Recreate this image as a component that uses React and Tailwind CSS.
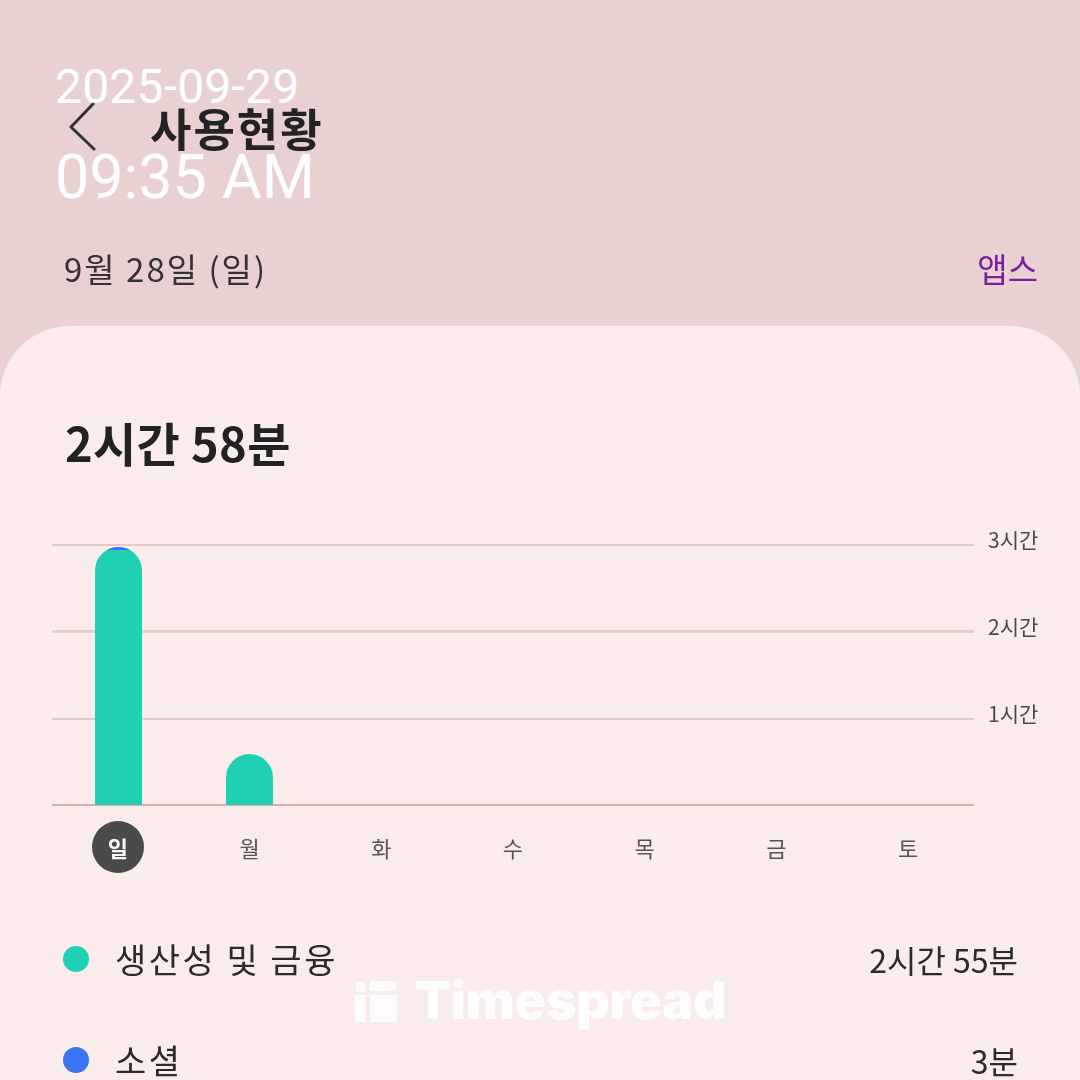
const KR = { fontFamily: '"Noto Sans CJK KR", sans-serif' };

const days = ["일", "월", "화", "수", "목", "금", "토"];

function Row({ label, color, time }) {
  return (
    <div className="flex items-center justify-between pl-[63px] pr-[62px]">
      <div className="flex items-center gap-[26px]">
        <span className={`w-[26px] h-[26px] rounded-full ${color}`} />
        <span className="text-[34px] leading-[44px] text-[#2b2b2b] tracking-[2.5px]">{label}</span>
      </div>
      <span className="text-[32px] leading-[44px] text-[#2b2b2b]">{time}</span>
    </div>
  );
}

export default function App() {
  return (
    <div style={KR} className="relative w-[1080px] h-[1080px] overflow-hidden bg-[#e9d1d1]">
      <div className="blur-[0.5px]">
        <header className="h-[326px] flex flex-col">
          <div className="flex items-center pl-[68px] pt-[100px] h-[156px]">
            <svg width="28" height="50" viewBox="0 0 28 50" fill="none" className="mt-[-2px]">
              <path d="M25 2 L3 25 L26 47" stroke="#333333" strokeWidth="3" strokeLinecap="round" strokeLinejoin="round" />
            </svg>
            <h1 className="ml-[54px] text-[45px] leading-[56px] font-bold text-[#232323] tracking-[2px]">사용현황</h1>
          </div>
          <div className="flex items-center justify-between pl-[64px] pr-[42px] mt-[88px]">
            <span className="text-[33px] leading-[48px] text-[#333333] tracking-[2px]">9월 28일 (일)</span>
            <span className="text-[33px] leading-[48px] text-[#7a1fa0]">앱스</span>
          </div>
        </header>

        <main className="h-[900px] bg-[#f9ecea] rounded-t-[70px]">
          <h2 className="pl-[65px] pt-[84px] text-[47px] leading-[64px] font-bold text-[#222222] tracking-[0.3px]">2시간 58분</h2>

          <div className="flex mt-[70px] pl-[52px]">
            <div className="relative w-[922px] h-[262px] flex flex-col justify-between">
              <div className="h-[2px] bg-[#e6c8c4]" />
              <div className="h-[3px] bg-[#e8cdc9]" />
              <div className="h-[2px] bg-[#e6c8c4]" />
              <div className="h-[2px] bg-[#dcaeaa]" />
              <div className="absolute inset-x-0 bottom-[1px] pl-[1px] grid grid-cols-7 items-end h-[259px]">
                <div className="flex justify-center">
                  <div className="w-[47px] h-[258px] rounded-t-[24px] bg-[#1fd0b4] overflow-hidden">
                    <div className="h-[3px] bg-[#3b74f5]" />
                  </div>
                </div>
                <div className="flex justify-center pr-[2px]">
                  <div className="w-[47px] h-[51px] rounded-t-[24px] bg-[#1fd0b4]" />
                </div>
              </div>
            </div>
            <div className="flex flex-col ml-[14px] mt-[-23px] text-[21px] leading-[36px] text-[#4a4a4a]">
              <span className="h-[87px]">3시간</span>
              <span className="h-[87px]">2시간</span>
              <span className="h-[87px]">1시간</span>
            </div>
          </div>

          <div className="grid grid-cols-7 w-[922px] ml-[52px] mt-[15px]">
            {days.map((d, i) => (
              <div key={d} className="flex justify-center">
                <span
                  className={`w-[52px] h-[52px] rounded-full flex items-center justify-center text-[22px] ${
                    i === 0 ? "bg-[#4a4a4a] text-[#f5f5f5] font-bold" : "text-[#555555]"
                  }`}
                >
                  {d}
                </span>
              </div>
            ))}
          </div>

          <div className="flex flex-col gap-[57px] mt-[64px]">
            <Row label="생산성 및 금융" color="bg-[#1fd0b4]" time="2시간 55분" />
            <Row label="소셜" color="bg-[#3b74f5]" time="3분" />
          </div>
        </main>
      </div>

      <div className="absolute left-[55px] top-[59px] text-white" style={{ fontFamily: 'Roboto, sans-serif' }}>
        <div className="text-[48px] leading-[56px] tracking-[0.2px]">2025-09-29</div>
        <div className="text-[61px] leading-[76px] mt-[24px]">09:35 AM</div>
      </div>

      <div className="absolute left-[355px] top-[971px] flex items-center gap-[18px] text-white/85">
        <svg width="42" height="42" viewBox="0 0 42 42" fill="currentColor" className="mt-[2px]">
          <circle cx="6" cy="6" r="5.5" />
          <rect x="0" y="14" width="11" height="27" />
          <rect x="15" y="0" width="26" height="10" />
          <rect x="15" y="14" width="27" height="27" />
        </svg>
        <span className="text-[52px] leading-[60px] font-black tracking-[-0.2px]" style={{ fontFamily: "Inter, sans-serif" }}>
          Timespread
        </span>
      </div>
    </div>
  );
}
